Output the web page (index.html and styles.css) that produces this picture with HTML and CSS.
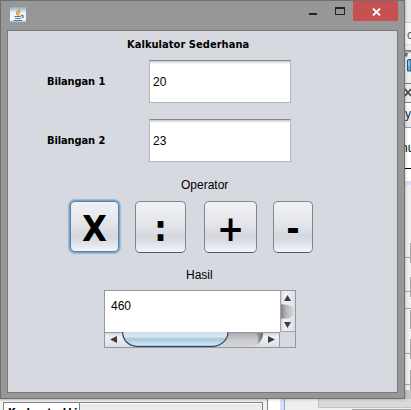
FILE: index.html
```html
<!DOCTYPE html>
<html lang="id">
<head>
<meta charset="utf-8">
<title>Kalkulator Sederhana</title>
<link rel="stylesheet" href="styles.css">
</head>
<body>
<div class="desktop">
  <aside class="side">
    <div class="s-top"></div>
    <div class="s-menu">c</div>
    <div class="s-tools">
      <svg width="6" height="38" viewBox="0 0 6 38"><path d="M0 5H6V7L3 8L2 12L0 11Z" fill="#777"/><path d="M0 7H4" stroke="#eee"/><path d="M2.5 15L4 14.5H6V26H2.5Z" fill="#58a9df" stroke="#19588d"/><path d="M4 16V21" stroke="#b9e0f6"/></svg>
    </div>
    <div class="s-tab"><svg width="6" height="18" viewBox="0 0 6 18"><path d="M0 5L6 12M0 12L6 5" stroke="#444" stroke-width="1.6"/></svg></div>
    <div class="s-name">y</div>
    <div class="s-code">nu</div>
    <div class="s-gap"></div>
    <div class="s-lav"></div>
    <div class="s-canvas">
      <svg width="6" height="206" viewBox="0 0 6 206"><path d="M0 72.500H5M0 106.500H5M0 123.500H6M0 168.500H5M0 199.500H5" stroke="#83a9d0"/><path d="M5.500 58V78M5.500 92V112M5.500 125V144M5.500 154V174M5.500 185V205" stroke="#a5a5a5"/></svg>
    </div>
  </aside>
  <footer class="bottom">
    <div class="b-tabs"><div class="b-tab">Kookmataakki</div><div class="b-rest"></div></div>
    <div class="b-white"></div>
    <div class="b-lav"></div>
    <div class="b-canvas"></div>
    <div class="b-panel"><i></i></div>
  </footer>

  <section class="window">
    <header class="titlebar">
      <svg class="java" width="16" height="16" viewBox="0 0 16 16">
        <defs><linearGradient id="jg" x2="0" y2="1"><stop stop-color="#8cabc0"/><stop offset=".35" stop-color="#eef3f6"/><stop offset=".8" stop-color="#f7f9fa"/><stop offset="1" stop-color="#7592a7"/></linearGradient></defs>
        <rect width="16" height="16" fill="url(#jg)"/>
        <path d="M9.500 2C9.500 4 6 4.500 6.500 6.500C6.600 7.400 7.500 7.800 7.500 8.500M10.500 4.500C8 5.500 8.500 6.500 9 7.200C9.200 7.700 8.500 8.500 8.500 8.500" fill="none" stroke="#e88528" stroke-width="1.300"/>
        <path d="M4.500 9.500H11M5 11.500H10.500M3.500 13.500H12M11 8.500C14 8 14 10.500 11.500 11" fill="none" stroke="#4d7ea0" stroke-width="1.200"/>
      </svg>
      <div class="controls">
        <span class="minimize"></span>
        <span class="maximize"></span>
        <span class="close"><svg width="9" height="8" viewBox="0 0 9 8"><path d="M1 .5L8 7.500M8 .5L1 7.500" stroke="#fff" stroke-width="1.800"/></svg></span>
      </div>
    </header>
    <main class="content">
      <h1 class="title"><span>Kalkulator Sederhana</span></h1>
      <div class="row"><label class="label">Bilangan 1</label><div class="field">20</div></div>
      <div class="row"><label class="label">Bilangan 2</label><div class="field">23</div></div>
      <div class="operator">Operator</div>
      <div class="buttons">
        <button class="btn focused"><span>X</span></button>
        <button class="btn colon"><span>:</span></button>
        <button class="btn plus"><span>+</span></button>
        <button class="btn minus"><span>-</span></button>
      </div>
      <div class="result-label">Hasil</div>
      <div class="scrollpane">
        <div class="output">460</div>
        <svg class="vbar" width="15" height="41" viewBox="0 0 15 41">
          <defs>
            <linearGradient id="v" x2="1" y2="0"><stop stop-color="#c9ccd1"/><stop offset=".3" stop-color="#f1f2f4"/><stop offset="1" stop-color="#dcdee2"/></linearGradient>
            <linearGradient id="vt" x2="1" y2="0"><stop stop-color="#77777b"/><stop offset=".4" stop-color="#b5b5b9"/><stop offset="1" stop-color="#dddde0"/></linearGradient>
          </defs>
          <rect width="15" height="41" fill="url(#v)"/>
          <path d="M0 13C5 14 9 13 12 16C14 18 15 20 15 21C14 24 12 25 10 27C7 28 3 27 0 28Z" fill="url(#vt)"/>
          <path d="M.5 0V41M0 40.500H15" stroke="#a2a5ad"/>
          <path d="M4 10L7.500 4L11 10ZM4 31L7.500 37L11 31Z" fill="#3c3d40"/>
        </svg>
        <svg class="hbar" width="175" height="15" viewBox="0 0 175 15">
          <defs>
            <linearGradient id="h" x2="0" y2="1"><stop stop-color="#cacdd2"/><stop offset=".3" stop-color="#f0f1f3"/><stop offset="1" stop-color="#dcdee2"/></linearGradient>
            <linearGradient id="tr" x2="0" y2="1"><stop stop-color="#a9a9ad"/><stop offset=".5" stop-color="#c9c9cd"/><stop offset="1" stop-color="#d8d8dc"/></linearGradient>
            <linearGradient id="th" x2="0" y2="1"><stop stop-color="#cbdeec"/><stop offset=".3" stop-color="#dce8f1"/><stop offset=".5" stop-color="#aac7dc"/><stop offset="1" stop-color="#d7f1ff"/></linearGradient>
            <linearGradient id="end" x2="1" y2="0"><stop stop-color="#707074" stop-opacity="0"/><stop offset="1" stop-color="#606064"/></linearGradient>
          </defs>
          <rect width="175" height="15" fill="url(#h)"/>
          <path d="M17 0H158C158 6 155 12 149 15H30C22 14 17 9 17 0Z" fill="url(#tr)"/>
          <path d="M150 0H158C158 6 156 10 152 12C154 8 153 3 150 0Z" fill="url(#end)"/>
          <path d="M17.500 0C18 8 23 14 32 14.300H108C117 14 123 7 123 0Z" fill="url(#th)"/>
          <path d="M17.500 0C18 8 23 14 32 14.300H108C117 14 123 7 123 0" fill="none" stroke="#2f485d" stroke-width="1.200"/>
          <path d="M0 .5H17M124 .5H175M174.500 0V15" stroke="#9699a1"/>
          <path d="M12 4L5 7.500L12 11ZM163 4L170 7.500L163 11Z" fill="#3c3d40"/>
        </svg>
        <div class="corner"></div>
      </div>
    </main>
  </section>
</div>
</body>
</html>
```
FILE: styles.css
```css
* { box-sizing: border-box; }
body { margin: 0; font-family: "Liberation Sans", Arial, sans-serif; font-size: 12px; color: #000; }
svg { display: block; }
.desktop { position: relative; width: 411px; height: 410px; overflow: hidden; background: #f0f0f0; display: flex; flex-direction: column; align-items: flex-end; }

.side { width: 6px; height: 399px; overflow: hidden; flex: none; }
.s-top { height: 23px; background: #e8e8e8; border-bottom: 1px solid #ccc; }
.s-menu { height: 22px; background: #f7f7f7; border-bottom: 1px solid #ddd; line-height: 24px; padding-left: 2px; color: #555; }
.s-tools { height: 38px; background: #eee; }
.s-tab { height: 20px; background: #ececec; border-top: 1px solid #777; border-bottom: 1px solid #85858c; }
.s-name { height: 25px; line-height: 23px; background: linear-gradient(#fff, #e5e5e5); border-bottom: 1px solid #83a3c2; color: #123; }
.s-code { height: 41px; line-height: 40px; background: #fff; border-bottom: 1px solid #000; text-indent: -4px; }
.s-gap { height: 12px; background: #fff; }
.s-lav { height: 4px; background: #dcdcff; }
.s-canvas { height: 214px; background: #eee linear-gradient(#c4c4c4, #dadada) no-repeat 0 205px; }

.bottom { width: 411px; height: 11px; display: flex; background: #f0f0f0; flex: none; }
.b-tabs { width: 268px; padding: 3px 4px 0 3px; display: flex; border-right: 1px solid #85858d; background: linear-gradient(#ddd, #f2f2f2 3px); }
.b-tab { width: 77px; height: 8px; overflow: hidden; background: #fff; border: solid #80828c; border-width: 1px 1px 0; font: bold 11px/20px "DejaVu Sans Condensed", sans-serif; padding-left: 4px; letter-spacing: -.9px; }
.b-rest { flex: 1; background: linear-gradient(#fff 1px, #e8e8e8 1px, #eee); border: solid #80828c; border-width: 1px 1px 0 0; }
.b-white { width: 12px; background: #fff; }
.b-lav { width: 5px; background: #dcdcff; border-right: 1px solid #8da7ca; }
.b-canvas { width: 33px; background: #eee; }
.b-panel { flex: 1; height: 9px; background: #dadada; border: solid #c3c3c3; border-width: 0 0 1px 1px; }
.b-panel i { display: block; height: 1px; margin: 10px 0 0 33px; background: #a0a0a0; }

.window { position: absolute; left: 0; top: 0; width: 405px; height: 399px; background: #979797; border: 1px solid #6f6f6f; padding: 0 6px 6px; box-shadow: 0 0 3px rgba(0,0,0,.3); }
.titlebar { height: 29px; display: flex; justify-content: space-between; }
.java { margin: 6px 0 0 3px; }
.controls { display: flex; height: 20px; }
.minimize { width: 8px; height: 2px; background: #222; margin: 12px 18px 0 0; }
.maximize { width: 10px; height: 8px; border: 1px solid #222; border-top-width: 2px; margin: 6px 8px 0 0; }
.close { width: 45px; background: #c75050; padding: 7px 0 0 19px; }

.content { width: 391px; height: 363px; background: #d6d9e0; border: 1px solid #797979; margin-left: 0; }
.title { margin: 0 0 0 119px; height: 29px; font: bold 11px/28px "DejaVu Sans Condensed", sans-serif; letter-spacing: .05px; white-space: nowrap; }
.row { display: flex; height: 43px; margin-bottom: 16px; }
.label { width: 141px; padding-left: 39px; font: bold 11px/44px "DejaVu Sans Condensed", sans-serif; letter-spacing: -.1px; }
.field { width: 142px; height: 43px; border: 1px solid #b5b6ba; border-top-color: #85868a; background: linear-gradient(#c8c8c8, #eee 2px, #fff 3px); padding-left: 3px; line-height: 42px; }
.operator { margin: -3px 0 0 173px; height: 26px; line-height: 20px; }
.buttons { display: flex; margin-left: 62px; height: 53px; }
.btn { height: 52px; padding: 0; border: 1px solid #838589; border-bottom-color: #55575b; border-radius: 5px; background: linear-gradient(#f0f1f3, #e3e5e9 45%, #d5d8df 68%, #d9dce3 78%, #f2f5fc); font: bold 36px/50px "DejaVu Sans Condensed", sans-serif; color: #000; width: 51px; }
.btn span { display: block; padding-top: 3px; line-height: 47px; }
.focused { width: 49px; height: 51px; border-color: #667f95; box-shadow: 0 0 0 1px #73a4d1, 0 0 1px 2px #9bb9d6; }
.colon { margin-left: 16px; }
.plus { width: 53px; margin-left: 18px; }
.minus { width: 40px; margin-left: 16px; }
.result-label { margin: 8px 0 0 178px; height: 28px; line-height: 26px; }
.scrollpane { margin-left: 96px; width: 192px; height: 58px; border: 1px solid #9297a1; display: grid; grid-template-columns: 175px 15px; grid-template-rows: 41px 15px; }
.output { background: #fff; padding: 8px 0 0 6px; line-height: 14px; }
```
